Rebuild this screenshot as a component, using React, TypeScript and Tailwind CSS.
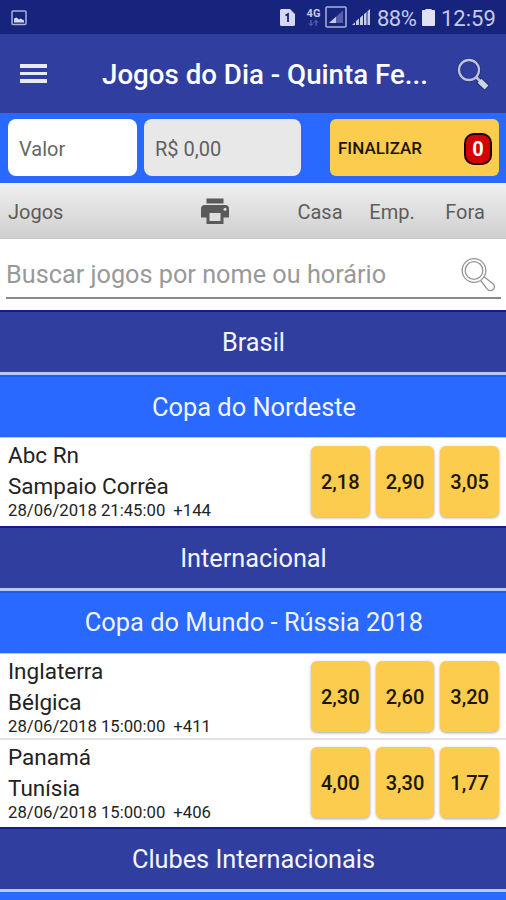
import clsx from 'clsx';

interface Match {
  home: string;
  away: string;
  date: string;
  extra: string;
  odds: string[];
}

interface Section {
  country: string;
  league: string;
  matches: Match[];
}

const sections: Section[] = [
  {
    country: 'Brasil',
    league: 'Copa do Nordeste',
    matches: [
      { home: 'Abc Rn', away: 'Sampaio Corrêa', date: '28/06/2018 21:45:00', extra: '+144', odds: ['2,18', '2,90', '3,05'] },
    ],
  },
  {
    country: 'Internacional',
    league: 'Copa do Mundo - Rússia 2018',
    matches: [
      { home: 'Inglaterra', away: 'Bélgica', date: '28/06/2018 15:00:00', extra: '+411', odds: ['2,30', '2,60', '3,20'] },
      { home: 'Panamá', away: 'Tunísia', date: '28/06/2018 15:00:00', extra: '+406', odds: ['4,00', '3,30', '1,77'] },
    ],
  },
];

function StatusBar() {
  return (
    <div className="flex h-[34px] items-center bg-[#16247e] pl-[11px] pr-[11px] text-[#c5cae9]">
      <svg className="mt-px h-4 w-4" viewBox="0 0 16 16" fill="none">
        <rect x="1" y="1" width="14" height="13.5" rx="1" stroke="#aab1da" strokeWidth="1.5" />
        <path d="M3 12.5V8.5l2.500-1 2.500 2 1.500-1L13 10.500v2z" fill="#d5d9f0" />
      </svg>
      <div className="ml-auto flex items-center">
        <svg className="h-[17px] w-[15px]" viewBox="0 0 15 17">
          <path d="M0 1.500A1.500 1.500 0 0 1 1.500 0H10l5 5v10.500a1.500 1.500 0 0 1-1.500 1.500h-12A1.500 1.500 0 0 1 0 15.500z" fill="#d5d9f0" />
          <path d="M5.500 6.500L8 5v8" stroke="#16247e" strokeWidth="1.800" fill="none" />
        </svg>
        <div className="ml-[11px] flex w-[15px] flex-col items-center">
          <span className="text-[11px] font-bold leading-[10px]">4G</span>
          <svg className="mt-px h-[6px] w-[11px]" viewBox="0 0 11 6" fill="none" stroke="#6f78b8">
            <path d="M3 0v5M1 3.500L3 5.500 5 3.500M8 6V1M6 2.500L8 .5l2 2" />
          </svg>
        </div>
        <svg className="ml-1 h-[22px] w-[22px]" viewBox="0 0 22 22">
          <rect x="1" y="1" width="20" height="20" rx="1" fill="none" stroke="#aab1da" strokeWidth="1.500" />
          <path d="M4 17L18 4.500V17z" fill="#5661a8" />
          <path d="M4 17l7-6.200V17z" fill="#c5cae9" />
        </svg>
        <svg className="ml-[5px] h-[18px] w-[19px]" viewBox="0 0 19 18" fill="#c5cae9">
          <path d="M0 17l3-2.700V17zM4 17v-4l3-2.500V17zM8 17V9.700L11 7v10zM12 17V6.200l2.500-2.200v13zM15.500 17V3.200L18 1v16z" />
        </svg>
        <span className="ml-[6px] mt-[3px] w-[40px] whitespace-nowrap text-[22px] leading-none tracking-[-0.5px]">88%</span>
        <svg className="ml-[5px] h-[17px] w-[13px]" viewBox="0 0 13 17" fill="#dfe2f5">
          <path d="M3.500 0h6v1H12a1 1 0 0 1 1 1v14a1 1 0 0 1-1 1H1a1 1 0 0 1-1-1V2a1 1 0 0 1 1-1h2.500z" />
        </svg>
        <span className="ml-[6px] mt-[3px] w-[54px] whitespace-nowrap text-[22px] leading-none">12:59</span>
      </div>
    </div>
  );
}

function Header() {
  return (
    <header className="flex h-[79px] items-center bg-[#303f9f] pl-5 pr-4">
      <div className="flex w-[27px] flex-col gap-1">
        <div className="h-[4px] bg-[#e8eaf6]" />
        <div className="h-[3px] bg-[#e8eaf6]" />
        <div className="h-[4px] bg-[#e8eaf6]" />
      </div>
      <h1 className="ml-[55px] mt-[2px] whitespace-nowrap text-[27.700px] font-medium leading-8 text-white">
        Jogos do Dia - Quinta Fe...
      </h1>
      <svg className="ml-auto mt-px h-[33px] w-[33px]" viewBox="0 0 33 33" fill="none">
        <circle cx="12" cy="12" r="10" stroke="#232e70" strokeWidth="3.800" />
        <path d="M21.500 22l8.500 8" stroke="#232e70" strokeWidth="7.500" />
        <circle cx="12" cy="12" r="10" stroke="#bcc3de" strokeWidth="2.300" />
        <path d="M19 19l4 4" stroke="#bcc3de" strokeWidth="2.500" />
        <path d="M22.500 22.800l7 6.700" stroke="#cbd3e6" strokeWidth="5.500" />
      </svg>
    </header>
  );
}

function BetBar() {
  return (
    <div className="flex h-[70px] bg-[#2969ff] pl-2 pr-[7px] pt-[6px]">
      <div className="flex h-[57px] w-[129px] items-center rounded-lg bg-white pl-[11px] pt-[2px] text-xl text-[#666]">Valor</div>
      <div className="ml-[7px] flex h-[57px] w-[157px] items-center rounded-lg bg-[#e8e8e8] pl-[11px] pt-[2px] text-xl text-[#606060]">
        R$ 0,00
      </div>
      <button className="ml-auto flex h-[57px] w-[169px] items-center justify-between rounded-md bg-[#fbcc4d] pl-2 pr-[7px] pt-[2px] text-[17px] font-medium text-[#1c1600]">
        FINALIZAR
        <span className="flex h-8 w-[28px] items-center justify-center rounded-[10px] border-2 border-[#1a0000] bg-[#d40000] text-xl font-bold text-white">
          0
        </span>
      </button>
    </div>
  );
}

function TableHeader() {
  return (
    <div className="flex h-14 items-center border-b border-[#c8c8c8] bg-gradient-to-b from-[#f0f0f0] to-[#cfcfcf] pl-2 pr-[10px] pt-[2px] text-xl text-[#5c5c5c]">
      <span className="w-[192px]">Jogos</span>
      <svg className="h-[27px] w-[30px]" viewBox="0 0 30 27">
        <path d="M6.500 0.500h17v5h-17z" fill="#5a5a5a" />
        <path d="M5 7h20a4 4 0 0 1 4 4v8.500h-5.500V26h-17v-6.500H1V11a4 4 0 0 1 4-4z" fill="#5a5a5a" />
        <path d="M9.500 15h11v8h-11z" fill="#dedede" />
        <circle cx="25" cy="11.300" r="1.500" fill="#dedede" />
      </svg>
      <span className="ml-auto w-[84px] text-center">Casa</span>
      <span className="w-[60px] text-center">Emp.</span>
      <span className="w-[74px] pl-[12px] text-center">Fora</span>
    </div>
  );
}

function Search() {
  return (
    <div className="h-[71px] bg-white pl-[6px] pr-[5px]">
      <div className="flex h-[60px] items-center border-b-2 border-[#8a8a8a] pt-[14px]">
        <span className="whitespace-nowrap text-[25.250px] leading-8 text-[#999]">Buscar jogos por nome ou horário</span>
        <svg className="mb-px ml-auto mr-[5px] h-[36px] w-[36px]" viewBox="0 0 36 36" fill="none" stroke="#949494" strokeWidth="1.300">
          <circle cx="14" cy="13.500" r="11.800" />
          <circle cx="14" cy="13.500" r="8.800" />
          <path d="M20.500 23.500l7 8.800a3.700 3.700 0 0 0 6-5L25 20.500l-1.500-.500" />
        </svg>
      </div>
    </div>
  );
}

function CountryBar({ name }: { name: string }) {
  return (
    <div className="flex h-[65px] items-center justify-center border-b-[3px] border-t-2 border-b-[#b9c6f3] border-t-[#141c92] bg-[#303f9f] pl-px pt-[2px] text-[25.300px] text-[#f4f5ff]">
      {name}
    </div>
  );
}

function LeagueBar({ name }: { name: string }) {
  return (
    <div className="flex h-[63px] items-center justify-center border-b border-t-2 border-b-[#b5ccff] border-t-[#1c5cf0] bg-[#2969ff] pl-[2px] text-[25.400px] text-[#f0f4ff]">
      {name}
    </div>
  );
}

function MatchRow({ match, divided }: { match: Match; divided: boolean }) {
  return (
    <div className={clsx('flex justify-between bg-white pl-2 pr-[7px]', divided ? 'h-[86px] border-b-2 border-[#e3e1e4]' : 'h-[87.500px]')}>
      <div className="whitespace-nowrap pt-[2px] text-[#222]">
        <div className="text-[22.500px] leading-[31px]">{match.home}</div>
        <div className="text-[22.500px] leading-[31px]">{match.away}</div>
        <div className="flex gap-2 text-[16.700px] leading-[17px]">
          <span>{match.date}</span>
          <span>{match.extra}</span>
        </div>
      </div>
      <div className="flex gap-[6px] pt-[7.500px]">
        {match.odds.map((odd) => (
          <button
            key={odd}
            className="h-[71px] w-[58.700px] rounded-md bg-[#fbcc4d] pt-px text-xl font-medium text-[#1c1600] shadow-[0_1px_3px_rgba(0,0,0,0.35)]"
          >
            {odd}
          </button>
        ))}
      </div>
    </div>
  );
}

export default function App() {
  return (
    <div className="h-[900px] w-[506px] overflow-hidden bg-white font-[Roboto,sans-serif]">
      <StatusBar />
      <Header />
      <BetBar />
      <TableHeader />
      <Search />
      {sections.map((section) => (
        <section key={section.country}>
          <CountryBar name={section.country} />
          <LeagueBar name={section.league} />
          {section.matches.map((match, i) => (
            <MatchRow key={match.home} match={match} divided={i < section.matches.length - 1} />
          ))}
        </section>
      ))}
      <CountryBar name="Clubes Internacionais" />
      <div className="h-4 bg-[#2969ff]" />
    </div>
  );
}
